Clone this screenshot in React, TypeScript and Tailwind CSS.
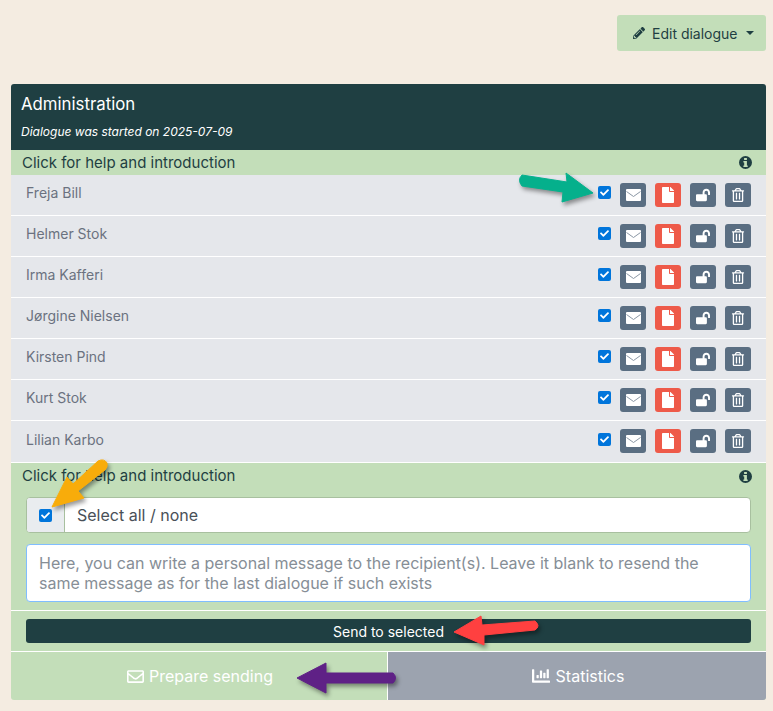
import React from "react";
import { FaPencilAlt, FaFile, FaLockOpen, FaRegTrashAlt, FaRegEnvelope, FaChartBar, FaCheck } from "react-icons/fa";

const names = ["Freja Bill", "Helmer Stok", "Irma Kafferi", "Jørgine Nielsen", "Kirsten Pind", "Kurt Stok", "Lilian Karbo"];

function Check({ className = "" }: { className?: string }) {
  return (
    <span className={"flex h-[13px] w-[13px] items-center justify-center rounded-[2px] bg-[#0075db] " + className}>
      <FaCheck className="text-[9px] text-white" />
    </span>
  );
}

function Mail() {
  return (
    <svg width="15" height="12" viewBox="0 0 15 12">
      <rect width="15" height="12" rx="1" fill="#fff" />
      <path d="M0.5 2.5 L7.5 7.5 L14.5 2.5" fill="none" stroke="#8a97a5" strokeWidth="1" />
    </svg>
  );
}

function Info() {
  return (
    <svg width="13" height="13" viewBox="0 0 13 13">
      <path
        fillRule="evenodd"
        fill="#1f3f42"
        d="M6.5 0a6.5 6.5 0 1 0 0 13a6.5 6.5 0 0 0 0-13ZM5.1 2h2.8v2.1H5.1ZM4.4 5h3.5v4.4h.8v1.6H4.4V9.4h.8V6.6h-.8Z"
      />
    </svg>
  );
}

function Row({ name, last }: { name: string; last: boolean }) {
  return (
    <div className={"flex items-center justify-between border-b border-white bg-[#e5e7eb] pl-[15px] pr-[15px] " + (last ? "h-[42px] pb-[1px]" : "h-[41px]")}>
      <span className={"text-[14px] text-[#6b7280] " + (last ? "-mt-[3px]" : "-mt-[5px]")}>{name}</span>
      <div className="flex items-center gap-[9px]">
        <Check className={last ? "-mt-[3px]" : "-mt-[5px]"} />
        <span className="flex h-[24px] w-[26px] items-center justify-center rounded-[3px] bg-[#5a6e82]"><Mail /></span>
        <span className="flex h-[24px] w-[26px] items-center justify-center rounded-[3px] bg-[#ee5a49] text-white"><FaFile className="text-[16px]" /></span>
        <span className="flex h-[24px] w-[26px] items-center justify-center rounded-[3px] bg-[#5a6e82] text-white"><FaLockOpen className="text-[14px]" /></span>
        <span className="flex h-[24px] w-[26px] items-center justify-center rounded-[3px] bg-[#5a6e82] text-white"><FaRegTrashAlt className="text-[14px]" /></span>
      </div>
    </div>
  );
}

function Arrow({ points, color }: { points: string; color: string }) {
  return (
    <svg className="absolute left-0 top-0" width="773" height="711" viewBox="0 0 773 711" style={{ filter: "drop-shadow(2px 3px 2px rgba(0,0,0,0.4))" }}>
      <path d={points} fill={color} stroke={color} strokeWidth="1" strokeLinejoin="round" />
    </svg>
  );
}

export default function App() {
  return (
    <div className="relative h-[711px] w-[773px] overflow-hidden bg-[#f4ece1] font-['Inter',sans-serif]">
      <div className="flex h-[84px] items-start justify-end pr-[7px] pt-[15px]">
        <button className="flex h-[36px] w-[149px] items-center rounded-[3px] bg-[#c3deb9] pl-[16px] text-[14px] text-[#1f3f42]">
          <FaPencilAlt className="mr-[7px] text-[12px]" />
          <span>Edit dialogue</span>
          <span className="ml-[8px] h-0 w-0 border-x-[4px] border-t-[4px] border-x-transparent border-t-[#1f3f42]" />
        </button>
      </div>
      <div className="mx-[11px] w-[755px] overflow-hidden rounded-[3px]">
        <div className="h-[66px] bg-[#1f3f42] px-[10px] pt-[8px] text-white">
          <div className="text-[16.8px] leading-[24px]">Administration</div>
          <div className="mt-[7px] text-[12px] italic leading-[18px]">Dialogue was started on 2025-07-09</div>
        </div>
        <div className="flex h-[25px] items-center justify-between bg-[#c3deb9] pl-[11px] pr-[14px] text-[15px] text-[#1f3f42]">
          <span className="mt-[2px]">Click for help and introduction</span>
          <Info />
        </div>
        {names.map((n, i) => <Row key={n} name={n} last={i === names.length - 1} />)}
        <div className="bg-[#c3deb9]">
          <div className="flex h-[27px] items-center justify-between pl-[11px] pr-[14px] text-[15px] text-[#1f3f42]">
            <span>Click for help and introduction</span>
            <Info />
          </div>
          <div className="px-[15px] pt-[7px]">
            <div className="flex h-[36px] overflow-hidden rounded-[4px] border border-[#a8c09f] bg-white">
              <div className="flex w-[38px] items-center justify-center border-r border-[#a8c09f] bg-[#e9ecef]"><Check /></div>
              <div className="flex flex-1 items-center pl-[12px] text-[16px] text-[#495057]">Select all / none</div>
            </div>
            <div className="mt-[11px] h-[58px] rounded-[4px] border border-[#80bdff] bg-white px-[12px] pt-[8px] text-[16px] leading-[20px] text-[#868e96]">
              Here, you can write a personal message to the recipient(s). Leave it blank to resend the same message as for the last dialogue if such exists
            </div>
          </div>
          <div className="mt-[8px] border-t border-white px-[15px] pb-[8px] pt-[8px]">
            <button className="flex h-[24px] w-full items-center justify-center rounded-[3px] bg-[#1f3f42] text-[14px] text-white">Send to selected</button>
          </div>
          <div className="flex h-[49px] border-t border-white text-[16px] text-white">
            <div className="flex w-[377px] items-center justify-center gap-[5px] border-r border-white pl-[2px]"><FaRegEnvelope className="text-[17px]" />Prepare sending</div>
            <div className="flex flex-1 items-center justify-center gap-[6px] bg-[#9ca3af] pl-[2px]"><FaChartBar className="text-[18px]" />Statistics</div>
          </div>
        </div>
      </div>
      <Arrow color="#05b08c" points="M522 175 L567 182 L566 173 L593 193 L562 202 L563 192 L522 186 Q517 180 522 175 Z" />
      <Arrow color="#f8ac0a" points="M98 461 Q104 458 107 463 Q108 467 105 470 L78 491 L84 498 L52 507 L67 477 L73 484 Z" />
      <Arrow color="#ff4040" points="M535 621 Q541 626 535 630 L484 635 L484 645 L454 632 L481 616 L482 625 Z" />
      <Arrow color="#5f2186" points="M393 673 Q398 678 393 683 L326 683 L326 693 L297 678 L326 663 L326 673 Z" />
    </div>
  );
}
